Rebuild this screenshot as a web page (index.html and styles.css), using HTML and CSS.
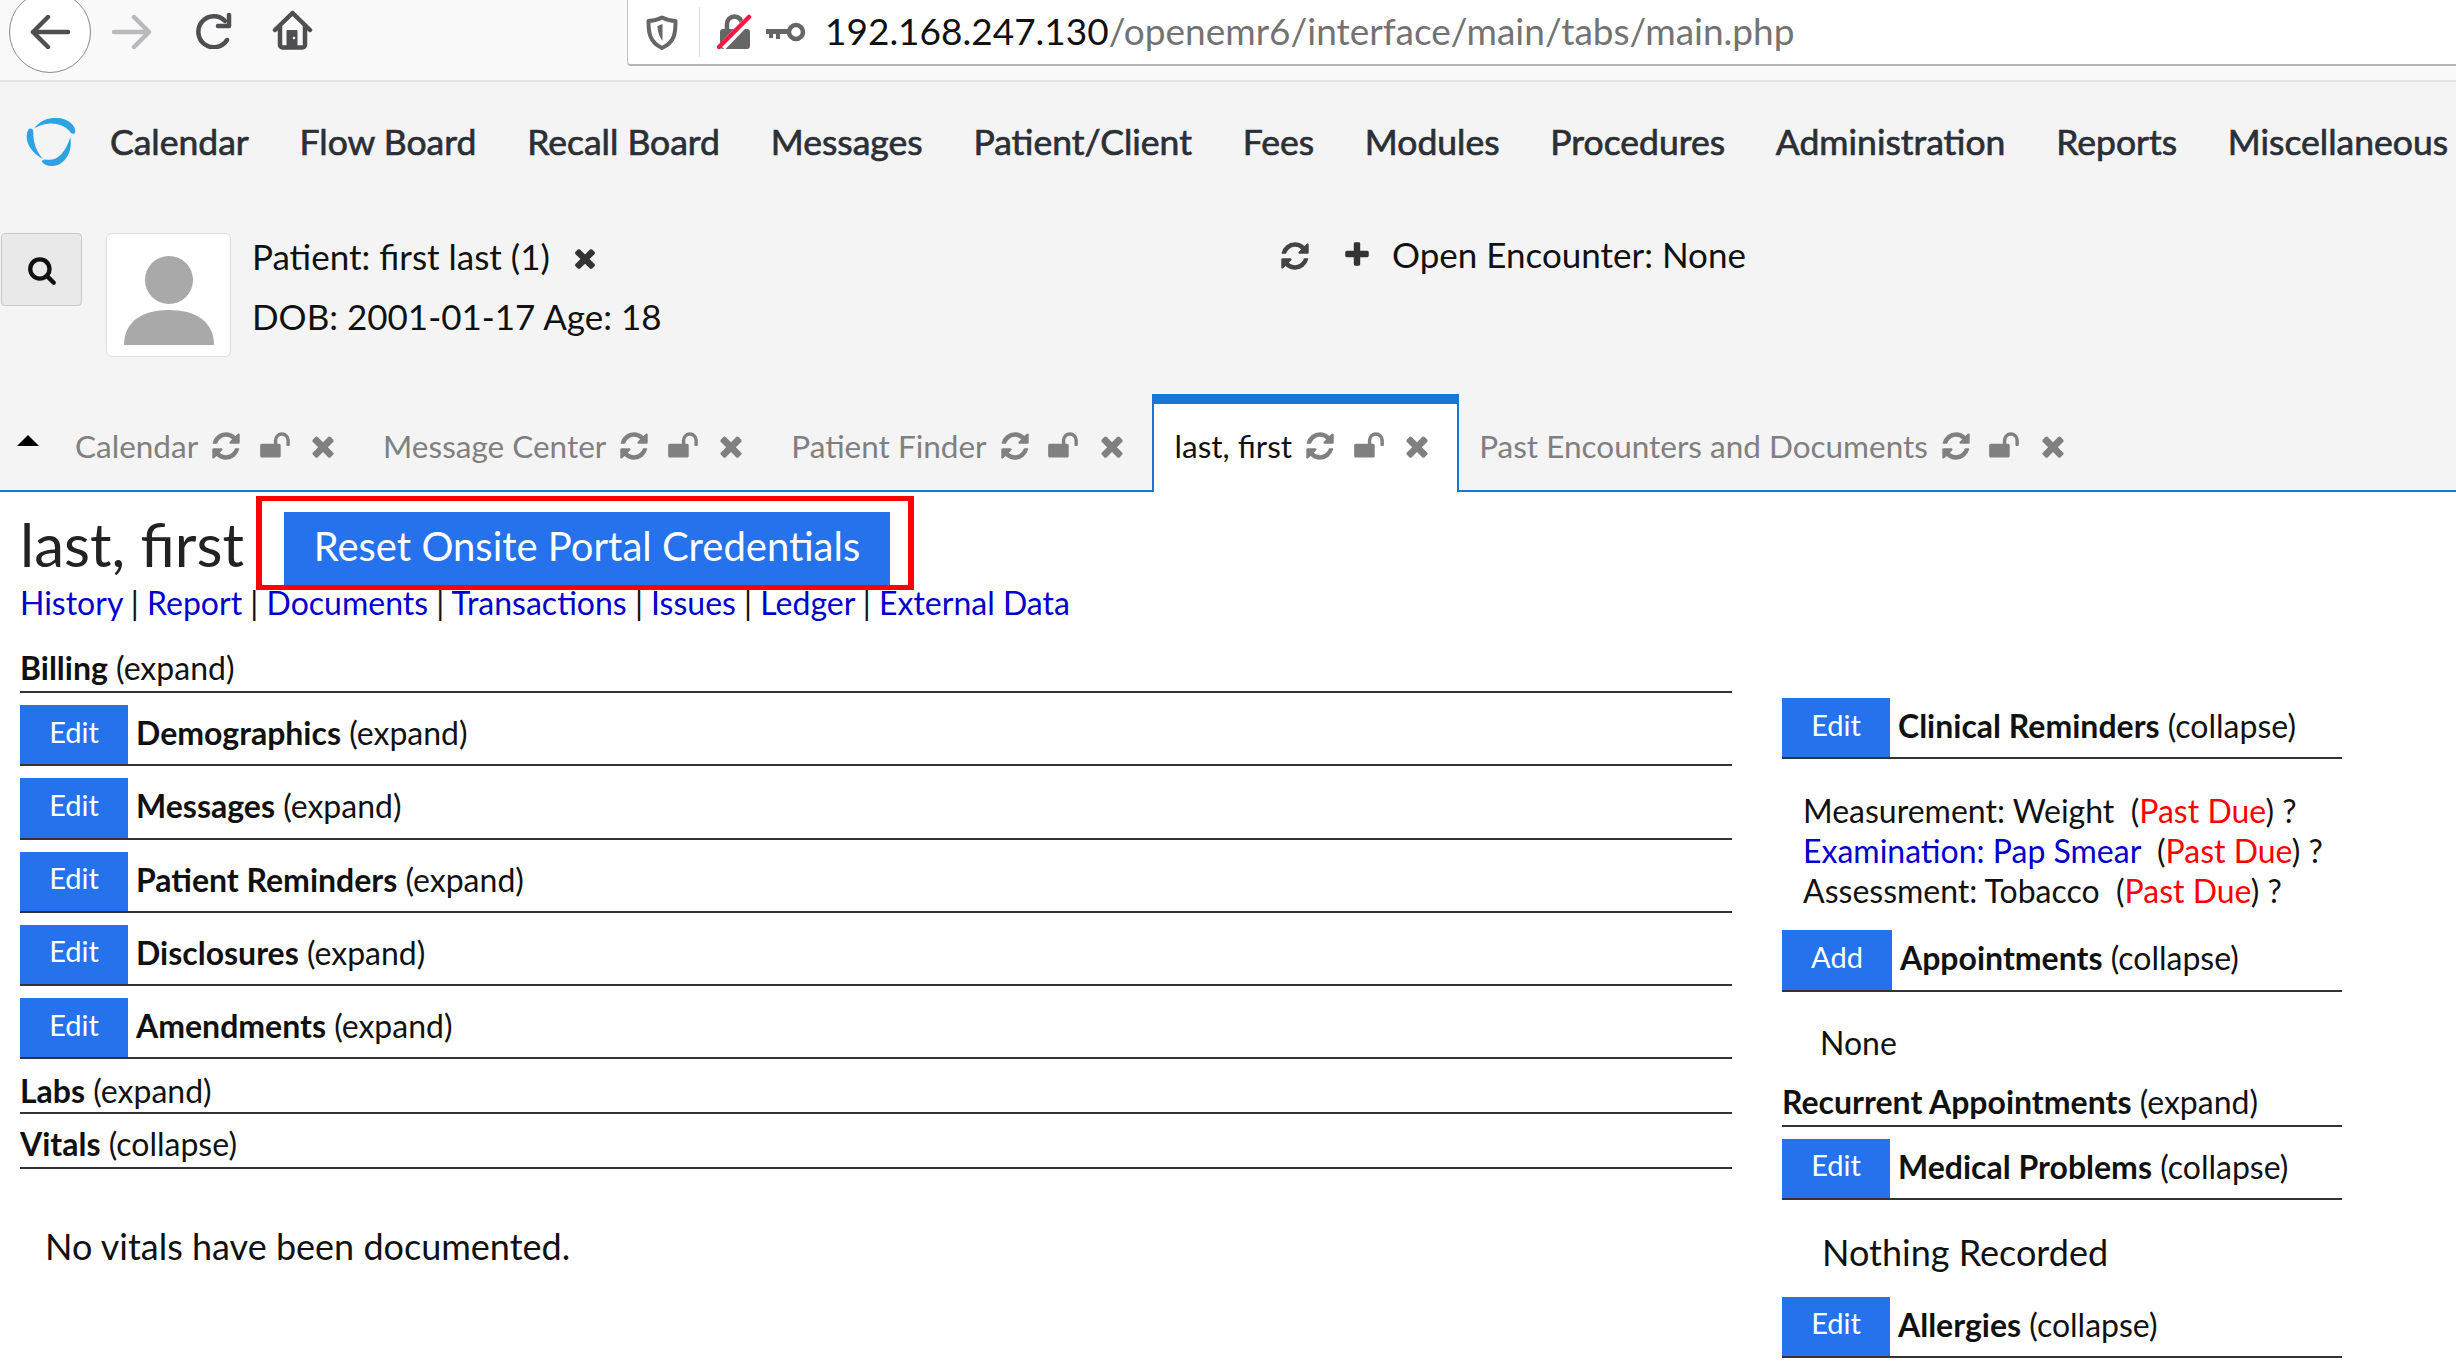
FILE: index.html
```html
<!DOCTYPE html>
<html lang="en">
<head>
    <meta charset="UTF-8">
    <title>OpenEMR</title>
    <link rel="stylesheet" href="styles.css">
</head>
<body>
    <svg class="icon-defs" xmlns="http://www.w3.org/2000/svg">
        <symbol id="i-refresh" viewBox="0 0 1792 1792"><path d="M1639 1056q0 5-1 7-64 268-268 434.5t-478 166.5q-146 0-282.5-55t-243.5-157l-129 129q-19 19-45 19t-45-19-19-45v-448q0-26 19-45t45-19h448q26 0 45 19t19 45-19 45l-137 137q71 66 161 102t187 36q134 0 250-65t186-179q11-17 53-117 8-23 30-23h192q13 0 22.5 9.5t9.5 22.5zm25-800v448q0 26-19 45t-45 19h-448q-26 0-45-19t-19-45 19-45l138-138q-148-137-349-137-134 0-250 65t-186 179q-11 17-53 117-8 23-30 23h-199q-13 0-22.5-9.5t-9.5-22.5v-7q65-268 270-434.5t480-166.5q146 0 284 55.5t245 156.5l130-129q19-19 45-19t45 19 19 45z"/></symbol>
        <symbol id="i-unlock" viewBox="0 0 1792 1792"><path d="M1728 576v256q0 26-19 45t-45 19h-64q-26 0-45-19t-19-45v-256q0-106-75-181t-181-75-181 75-75 181v192h96q40 0 68 28t28 68v576q0 40-28 68t-68 28h-960q-40 0-68-28t-28-68v-576q0-40 28-68t68-28h672v-192q0-185 131.5-316.5t316.5-131.5 316.5 131.5 131.5 316.5z"/></symbol>
        <symbol id="i-times" viewBox="0 0 1792 1792"><path d="M1490 1322q0 40-28 68l-136 136q-28 28-68 28t-68-28l-294-294-294 294q-28 28-68 28t-68-28l-136-136q-28-28-28-68t28-68l294-294-294-294q-28-28-28-68t28-68l136-136q28-28 68-28t68 28l294 294 294-294q28-28 68-28t68 28l136 136q28 28 28 68t-28 68l-294 294 294 294q28 28 28 68z"/></symbol>
        <symbol id="i-plus" viewBox="0 0 1792 1792"><path d="M1600 736v192q0 40-28 68t-68 28h-416v416q0 40-28 68t-68 28h-192q-40 0-68-28t-28-68v-416h-416q-40 0-68-28t-28-68v-192q0-40 28-68t68-28h416v-416q0-40 28-68t68-28h192q40 0 68 28t28 68v416h416q40 0 68 28t28 68z"/></symbol>
        <symbol id="i-search" viewBox="0 0 1792 1792"><path d="M1216 832q0-185-131.5-316.5t-316.5-131.5-316.5 131.5-131.5 316.5 131.5 316.5 316.5 131.5 316.5-131.5 131.5-316.5zm512 832q0 52-38 90t-90 38q-54 0-90-38l-343-342q-179 124-399 124-143 0-273.5-55.5t-225-150-150-225-55.5-273.5 55.5-273.5 150-225 225-150 273.5-55.5 273.5 55.5 225 150 150 225 55.5 273.5q0 220-124 399l343 343q37 37 37 90z"/></symbol>
    </svg>

    <div class="toolbar">
        <div class="back-btn">
            <svg width="40" height="34" viewBox="0 0 40 34" fill="none" stroke="#4f4f52" stroke-width="4.5" stroke-linecap="round" stroke-linejoin="round"><path d="M38 17H3M18 2L3 17l15 15"/></svg>
        </div>
        <svg class="forward" width="40" height="34" viewBox="0 0 40 34" fill="none" stroke="#b9b9bb" stroke-width="4.5" stroke-linecap="round" stroke-linejoin="round"><path d="M2 17h35M22 2l15 15-15 15"/></svg>
        <svg class="reload" width="38" height="36" viewBox="0 0 38 36" fill="none" stroke="#4f4f52" stroke-width="4.5" stroke-linecap="round" stroke-linejoin="round"><path d="M31 8A15.5 15.5 0 1 0 33 27"/><path d="M35 2v11H24"/></svg>
        <svg class="home" width="41" height="40" viewBox="0 0 41 40"><path d="M3 20L20.500 3 38 20M8 16v19a2.500 2.500 0 0 0 2.500 2.500h20A2.500 2.500 0 0 0 33 35V16" fill="none" stroke="#4f4f52" stroke-width="4.500" stroke-linecap="round" stroke-linejoin="round"/><rect x="14.500" y="20" width="11" height="17" rx="1" fill="#4f4f52"/><circle cx="22" cy="28" r="1.200" fill="#fff"/></svg>
        <div class="urlbar">
            <svg width="32" height="35" viewBox="0 0 32 35"><path d="M16 2.500C11 5 6 6 2.500 6c0 12 1 21 13.500 27C29 27 29.500 18 29.500 6c-3.500 0-8.500-1-13.500-3.500z" fill="none" stroke="#666" stroke-width="4" stroke-linejoin="round"/><path d="M16.500 9v17c-3-4-5-9-5-15z" fill="#666"/></svg>
            <span class="url-divider"></span>
            <svg width="36" height="36" viewBox="0 0 36 36"><path d="M10 16V10a7.500 7.500 0 0 1 15 0v6" fill="none" stroke="#666" stroke-width="4.500"/><rect x="3" y="15" width="30" height="20" rx="3" fill="#666"/><path d="M5 33L33 4" stroke="#fff" stroke-width="8"/><path d="M2 33L32 3" stroke="#ff1744" stroke-width="4.500" stroke-linecap="round"/></svg>
            <svg class="key" width="40" height="20" viewBox="0 0 40 20"><circle cx="30" cy="10" r="7" fill="none" stroke="#666" stroke-width="4.500"/><path d="M0 7h24v5H14v5h-4v-5H7v4H3v-4H0z" fill="#666"/></svg>
            <span class="url"><span class="url-host">192.168.247.130</span>/openemr6/interface/main/tabs/main.php</span>
        </div>
    </div>

    <nav class="menu">
        <svg class="logo" width="50" height="50" viewBox="33 27 150 150" fill="#2ea3e3"><path d="M58 58C75 33 110 20 145 30c20 6 37 22 36 38-1 8-11 8-16 0-15-18-40-26-65-24-15 1-30 7-42 14z"/><path d="M40 62c5-7 15-4 15 6-1 27 7 57 29 82-29-15-49-40-49-68 0-8 2-15 5-20z"/><path d="M82 160c-4-8 6-10 14-8 29 4 54-17 70-67 6 35-6 65-31 80-20 10-45 7-53-5z"/></svg>
        <a href="#">Calendar</a>
        <a href="#">Flow Board</a>
        <a href="#">Recall Board</a>
        <a href="#">Messages</a>
        <a href="#">Patient/Client</a>
        <a href="#">Fees</a>
        <a href="#">Modules</a>
        <a href="#">Procedures</a>
        <a href="#">Administration</a>
        <a href="#">Reports</a>
        <a href="#">Miscellaneous</a>
    </nav>

    <div class="patient-bar">
        <button class="search-btn"><svg width="30" height="30"><use href="#i-search"/></svg></button>
        <div class="avatar">
            <svg width="92" height="90" viewBox="0 0 92 90" fill="#a9a9a9"><ellipse cx="46" cy="24" rx="24" ry="24"/><path d="M1 89C1 65 20 54 46 54s45 11 45 35z"/></svg>
        </div>
        <div class="patient-info">
            <div class="patient-line">Patient: first last (1) <svg class="patient-close" width="30" height="30"><use href="#i-times"/></svg></div>
            <div class="patient-line">DOB: 2001-01-17 Age: 18</div>
        </div>
        <div class="encounter">
            <svg class="enc-refresh" width="32" height="32"><use href="#i-refresh"/></svg>
            <svg class="enc-plus" width="30" height="30"><use href="#i-plus"/></svg>
            <span>Open Encounter: None</span>
        </div>
    </div>

    <div class="tabs">
        <span class="caret"></span>
        <div class="tab tab-first">Calendar <span class="tab-icons"><svg><use href="#i-refresh"/></svg><svg><use href="#i-unlock"/></svg><svg><use href="#i-times"/></svg></span></div>
        <div class="tab">Message Center <span class="tab-icons"><svg><use href="#i-refresh"/></svg><svg><use href="#i-unlock"/></svg><svg><use href="#i-times"/></svg></span></div>
        <div class="tab tab-before">Patient Finder <span class="tab-icons"><svg><use href="#i-refresh"/></svg><svg><use href="#i-unlock"/></svg><svg><use href="#i-times"/></svg></span></div>
        <div class="tab tab-active">last, first <span class="tab-icons"><svg><use href="#i-refresh"/></svg><svg><use href="#i-unlock"/></svg><svg><use href="#i-times"/></svg></span></div>
        <div class="tab tab-last">Past Encounters and Documents <span class="tab-icons"><svg><use href="#i-refresh"/></svg><svg><use href="#i-unlock"/></svg><svg><use href="#i-times"/></svg></span></div>
    </div>

    <div class="content">
        <div class="title-row">
            <h1>last, first</h1>
            <div class="highlight"><button class="portal-btn">Reset Onsite Portal Credentials</button></div>
        </div>
        <div class="links">
            <a href="#">History</a> | <a href="#">Report</a> | <a href="#">Documents</a> | <a href="#">Transactions</a> | <a href="#">Issues</a> | <a href="#">Ledger</a> | <a href="#">External Data</a>
        </div>

        <div class="columns">
            <div class="col-left">
                <div class="row row-plain row-billing"><b>Billing</b>&nbsp;(expand)</div>
                <div class="row"><span class="edit">Edit</span><b>Demographics</b>&nbsp;(expand)</div>
                <div class="row"><span class="edit">Edit</span><b>Messages</b>&nbsp;(expand)</div>
                <div class="row"><span class="edit">Edit</span><b>Patient Reminders</b>&nbsp;(expand)</div>
                <div class="row"><span class="edit">Edit</span><b>Disclosures</b>&nbsp;(expand)</div>
                <div class="row"><span class="edit">Edit</span><b>Amendments</b>&nbsp;(expand)</div>
                <div class="row row-plain row-labs"><b>Labs</b>&nbsp;(expand)</div>
                <div class="row row-plain row-vitals"><b>Vitals</b>&nbsp;(collapse)</div>
                <p class="no-vitals">No vitals have been documented.</p>
            </div>
            <div class="col-right">
                <div class="row"><span class="edit">Edit</span><b>Clinical Reminders</b>&nbsp;(collapse)</div>
                <div class="reminders">
                    <div>Measurement: Weight&nbsp; (<span class="due">Past Due</span>) ?</div>
                    <div><a href="#">Examination: Pap Smear</a>&nbsp; (<span class="due">Past Due</span>) ?</div>
                    <div>Assessment: Tobacco&nbsp; (<span class="due">Past Due</span>) ?</div>
                </div>
                <div class="row"><span class="edit edit-add">Add</span><b>Appointments</b>&nbsp;(collapse)</div>
                <div class="none-text">None</div>
                <div class="row row-plain row-recurrent"><b>Recurrent Appointments</b>&nbsp;(expand)</div>
                <div class="row"><span class="edit">Edit</span><b>Medical Problems</b>&nbsp;(collapse)</div>
                <div class="nothing-text">Nothing Recorded</div>
                <div class="row"><span class="edit">Edit</span><b>Allergies</b>&nbsp;(collapse)</div>
            </div>
        </div>
    </div>
</body>
</html>
```

FILE: styles.css
```css
html, body {
    margin: 0;
    height: 1366px;
    overflow: hidden;
}
body {
    font-family: Lato, "Open Sans", sans-serif;
    font-size: 32px;
    color: #111;
    background: #fff;
}
.icon-defs {
    display: none;
}

/* browser toolbar */
.toolbar {
    display: flex;
    align-items: flex-start;
    height: 80px;
    background: #f9f9fa;
    border-bottom: 2px solid #e4e4e5;
    box-sizing: content-box;
}
.back-btn {
    display: flex;
    align-items: center;
    justify-content: center;
    width: 82px;
    height: 82px;
    margin: -9px 0 0 9px;
    background: #fff;
    border: 1px solid #8a8a8c;
    border-radius: 50%;
    box-sizing: border-box;
}
.forward {
    margin: 15px 0 0 21px;
}
.reload {
    margin: 13px 0 0 42px;
}
.home {
    margin: 10px 0 0 40px;
}
.urlbar {
    display: flex;
    align-items: center;
    flex: 1;
    height: 66px;
    margin-left: 314px;
    padding-left: 18px;
    background: #fff;
    border-left: 1px solid #c4c4c6;
    border-bottom: 2px solid #b5b5b7;
    border-bottom-left-radius: 4px;
    box-sizing: border-box;
}
.url-divider {
    width: 1px;
    height: 50px;
    margin: 0 17px 0 21px;
    background: #dcdcde;
}
.key {
    margin-left: 13px;
}
.url {
    margin-left: 19px;
    margin-top: -4px;
    font-size: 37px;
    color: #737373;
    white-space: nowrap;
}
.url-host {
    color: #111;
}

/* app menu */
.menu {
    display: flex;
    align-items: center;
    height: 150px;
    padding: 0 0 28px 26px;
    background: #f4f4f4;
    box-sizing: border-box;
    white-space: nowrap;
}
.logo {
    flex: none;
    margin-right: 34px;
}
.menu a {
    flex: none;
    margin: -3px 50.8px 0 0;
    font-size: 35.5px;
    color: #2b2f36;
    text-decoration: none;
    -webkit-text-stroke: 0.7px #2b2f36;
}

/* patient header */
.patient-bar {
    display: flex;
    align-items: flex-start;
    height: 162px;
    padding-top: 1px;
    background: #f4f4f4;
    box-sizing: border-box;
}
.search-btn {
    display: flex;
    align-items: center;
    justify-content: center;
    width: 81px;
    height: 73px;
    margin-left: 1px;
    padding: 0;
    background: #e9e9e9;
    border: 1px solid #c8c8c8;
    border-radius: 4px;
    fill: #111;
}
.avatar {
    display: flex;
    align-items: flex-end;
    justify-content: center;
    width: 125px;
    height: 124px;
    margin-left: 24px;
    padding-bottom: 10px;
    background: #fff;
    border: 1px solid #dedede;
    border-radius: 6px;
    box-sizing: border-box;
}
.patient-info {
    margin-left: 21px;
    font-size: 35px;
    line-height: 60px;
    width: 1029px;
    margin-top: -7px;
}
.patient-line {
    display: flex;
    align-items: center;
}
.patient-close {
    margin: 4px 0 0 20px;
    fill: #333;
}
.encounter {
    display: flex;
    align-items: center;
    margin-top: -9px;
    height: 60px;
    font-size: 35px;
    margin-left: -2px;
    white-space: nowrap;
}
.enc-refresh {
    margin-top: 3px;
    fill: #444;
}
.enc-plus {
    margin: 2px 20px 0 31px;
    fill: #333;
}

/* tabs */
.tabs {
    display: flex;
    align-items: stretch;
    height: 98px;
    background: #f4f4f4;
    border-bottom: 2px solid #1976d2;
    box-sizing: border-box;
}
.caret {
    width: 0;
    height: 0;
    margin: 41px 0 0 17px;
    border-left: 11px solid transparent;
    border-right: 11px solid transparent;
    border-bottom: 11px solid #000;
}
.tab {
    display: flex;
    align-items: center;
    padding: 8px 22px 0 22px;
    font-size: 31.5px;
    color: #808080;
    white-space: nowrap;
}
.tab-first {
    padding-left: 36px;
}
.tab-before {
    padding-right: 24px;
}
.tab-icons {
    display: flex;
    align-items: center;
    margin-left: 12px;
    gap: 16.5px;
    fill: #808080;
}
.tab-icons svg {
    width: 32px;
    height: 32px;
}
.tab-active {
    height: 98px;
    margin-bottom: -2px;
    padding: 0 24px 4px 21px;
    background: #fff;
    color: #111;
    border: 2px solid #1976d2;
    border-top-width: 10px;
    border-bottom: 0;
    box-sizing: border-box;
}
.tab-last {
    padding-left: 20px;
}

/* main content */
.content {
    padding-left: 20px;
}
.title-row {
    display: flex;
    align-items: flex-start;
}
h1 {
    margin: 18px 0 0 0;
    font-size: 60px;
    font-weight: 400;
    line-height: 68px;
    color: #222;
}
.highlight {
    margin: 4px 0 0 12px;
    padding: 11px 18px 0 22px;
    border: 5px solid #f00;
    border-left-width: 6px;
    border-right-width: 6px;
}
.portal-btn {
    display: block;
    width: 606px;
    height: 73px;
    padding: 0 0 6px;
    background: #2672ec;
    border: 0;
    font-family: inherit;
    font-size: 40px;
    color: #fff;
}
.links {
    height: 40px;
    margin-top: -7px;
    line-height: 40px;
    font-size: 32px;
    white-space: nowrap;
}
.links a,
.reminders a {
    color: #00c;
    text-decoration: none;
}
.columns {
    display: flex;
    gap: 50px;
    margin-top: 7px;
}
.col-left {
    width: 1712px;
}
.col-right {
    width: 560px;
    padding-top: 68px;
}
.row {
    display: flex;
    align-items: center;
    height: 61.25px;
    margin-bottom: 12px;
    padding-bottom: 4px;
    border-bottom: 2px solid #333;
    box-sizing: border-box;
    white-space: nowrap;
}
.row b {
    font-weight: 700;
}
.edit {
    align-self: stretch;
    display: flex;
    align-items: center;
    justify-content: center;
    width: 108px;
    margin: 0 8px -4px 0;
    padding-bottom: 7px;
    background: #2672ec;
    color: #fff;
    font-size: 29px;
}
.edit-add {
    width: 110px;
}
.row-plain {
    height: auto;
    line-height: 40px;
    padding-bottom: 3px;
}
.row-billing {
    margin-top: 18px;
    margin-bottom: 12px;
}
.row-labs {
    margin-bottom: 10px;
    margin-top: 0;
    padding-bottom: 1px;
}
.row-vitals {
    margin-bottom: 0;
}
.no-vitals {
    margin: 55px 0 0 25px;
    font-size: 36px;
}
.reminders {
    margin: 32px 0 0 21px;
    line-height: 40px;
    height: 139px;
}
.due {
    color: #f00;
}
.none-text {
    height: 59px;
    margin: 31px 0 0 38px;
    line-height: 40px;
}
.row-recurrent {
    margin-bottom: 12px;
}
.nothing-text {
    height: 67px;
    margin: 30px 0 0 40px;
    font-size: 36px;
    line-height: 44px;
}
```
